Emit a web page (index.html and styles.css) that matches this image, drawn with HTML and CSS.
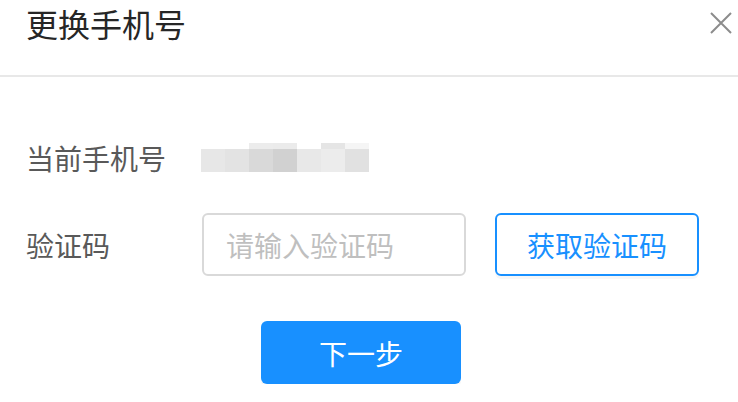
FILE: index.html
```html
<!DOCTYPE html>
<html lang="zh-CN">
<head>
<meta charset="utf-8">
<title>更换手机号</title>
<link rel="stylesheet" href="styles.css">
</head>
<body>
<div class="dialog">
  <div class="header">
    <div class="title">更换手机号</div>
    <button class="close" aria-label="关闭">
      <svg width="22" height="22" viewBox="0 0 22 22"><path d="M1 1 L21 21 M21 1 L1 21" stroke="#8c8c8c" stroke-width="2" fill="none"/></svg>
    </button>
  </div>
  <div class="body">
    <div class="row">
      <div class="label">当前手机号</div>
      <div class="mosaic">
        <div class="mrow top">
          <span class="b"></span><span class="b"></span><span class="b" style="background:#ececec"></span><span class="b" style="background:#ebebeb"></span><span class="b"></span><span class="b" style="background:#e5e5e5"></span><span class="b" style="background:#f5f5f5"></span>
        </div>
        <div class="mrow bottom">
          <span class="b" style="background:#e7e7e7"></span><span class="b" style="background:#e3e3e3"></span><span class="b" style="background:#d9d9d9"></span><span class="b" style="background:#d1d1d1"></span><span class="b" style="background:#e8e8e8"></span><span class="b" style="background:#ececec"></span><span class="b" style="background:#e1e1e1"></span>
        </div>
      </div>
    </div>
    <div class="row">
      <div class="label">验证码</div>
      <input class="input" type="text" placeholder="请输入验证码">
      <button class="btn-outline">获取验证码</button>
    </div>
    <div class="actions">
      <button class="btn-primary">下一步</button>
    </div>
  </div>
</div>
</body>
</html>
```
FILE: styles.css
```css
html, body {
  margin: 0;
  padding: 0;
  background: #fff;
}
body {
  font-family: "Noto Sans CJK SC", "Noto Sans", sans-serif;
  color: #595959;
}
.dialog {
  width: 738px;
}
.header {
  height: 75px;
  border-bottom: 2px solid #e8e8e8;
  display: flex;
  align-items: flex-start;
  justify-content: space-between;
  padding: 0 6px 0 26px;
}
.title {
  font-size: 32px;
  line-height: 46px;
  color: #262626;
  margin-top: 0;
}
.close {
  border: 0;
  background: none;
  padding: 0;
  margin-top: 12px;
  width: 22px;
  height: 22px;
  cursor: pointer;
}
.close svg {
  display: block;
}
.body {
  padding: 49px 0 0 26px;
}
.row {
  display: flex;
  align-items: center;
  height: 63px;
  margin-bottom: 24px;
}
.label {
  width: 176px;
  flex: none;
  font-size: 28px;
  line-height: 40px;
  color: #595959;
}
.mosaic {
  margin-left: -1px;
  display: flex;
  flex-direction: column;
}
.mrow {
  display: flex;
}
.mrow.top { height: 6px; }
.mrow.bottom { height: 23px; }
.b {
  width: 24px;
  height: 100%;
  display: block;
}
.input {
  box-sizing: border-box;
  width: 264px;
  height: 63px;
  border: 2px solid #d9d9d9;
  border-radius: 6px;
  padding: 0 22px;
  font-family: inherit;
  font-size: 28px;
  color: #595959;
  outline: none;
  margin: 0;
}
.input::placeholder {
  color: #bfbfbf;
}
.btn-outline {
  box-sizing: border-box;
  margin-left: 29px;
  width: 204px;
  height: 63px;
  border: 2px solid #1890ff;
  border-radius: 6px;
  background: #fff;
  color: #1890ff;
  font-family: inherit;
  font-size: 28px;
  padding: 0;
  box-shadow: 0 3px 0 rgba(0, 0, 0, 0.03);
}
.actions {
  display: flex;
  padding-left: 235px;
  margin-top: 45px;
}
.btn-primary {
  width: 200px;
  height: 63px;
  border: 0;
  border-radius: 6px;
  background: #1890ff;
  color: #fff;
  font-family: inherit;
  font-size: 28px;
  padding: 0;
  box-shadow: 0 3px 0 rgba(0, 0, 0, 0.035);
}
```
